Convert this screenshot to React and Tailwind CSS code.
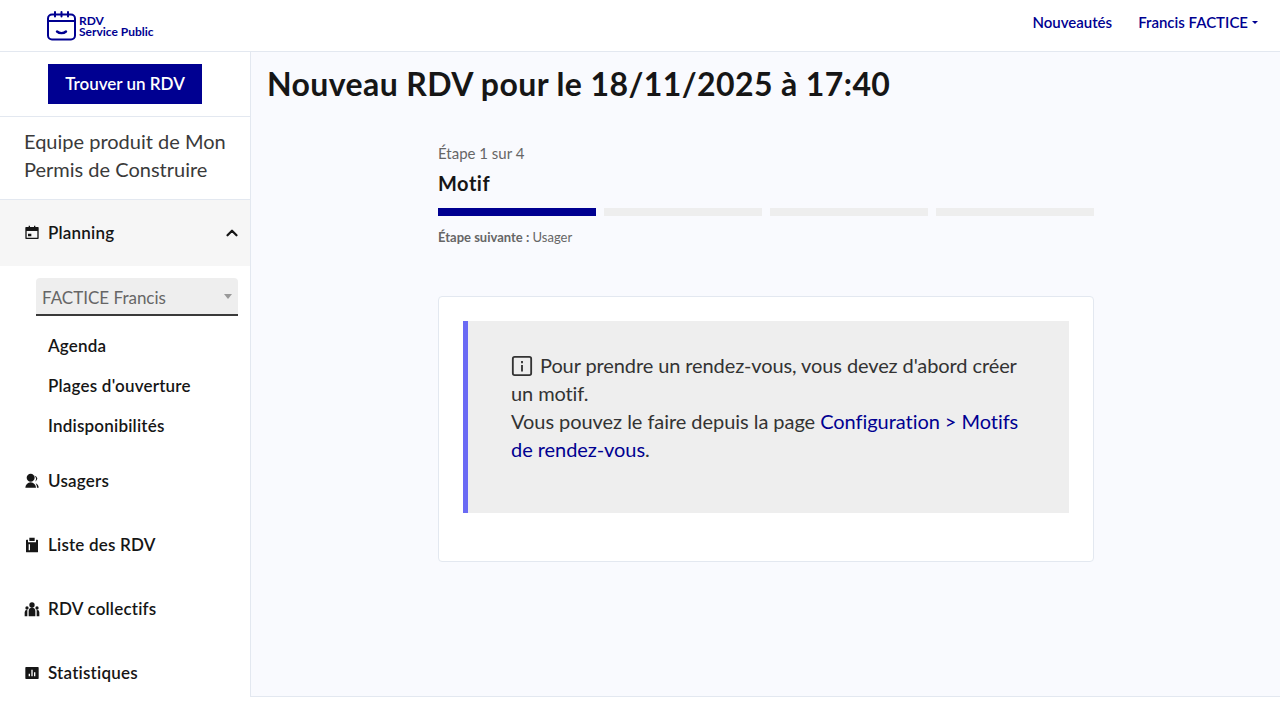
import React from 'react'
import { ChevronUp } from 'lucide-react'

const font = { fontFamily: 'Lato, "Noto Sans", sans-serif' }

function CalendarIcon() {
  return (
    <svg viewBox="0 0 24 24" className="w-4 h-4 fill-[#161616]">
      <path d="M17 3h4a1 1 0 0 1 1 1v16a1 1 0 0 1-1 1H3a1 1 0 0 1-1-1V4a1 1 0 0 1 1-1h4V1h2v2h6V1h2v2ZM4 9v10h16V9H4Zm2 4h5v4H6v-4Z" />
    </svg>
  )
}

function UsersIcon() {
  return (
    <svg viewBox="0 0 24 24" className="w-4 h-4 fill-[#161616]">
      <path d="M2 22a8 8 0 0 1 16 0H2Zm8-9c-3.3 0-6-2.7-6-6s2.7-6 6-6 6 2.7 6 6-2.7 6-6 6Zm7.4 2.2A7.5 7.5 0 0 1 22 22h-2.5c0-2.6-.8-5-2.1-6.8Zm-2-11.3a7 7 0 0 1 1.1 9.4A6 6 0 0 0 20 8a6 6 0 0 0-4.6-4.1Z" />
    </svg>
  )
}

function ClipboardIcon() {
  return (
    <svg viewBox="0 0 24 24" className="w-4 h-4 fill-[#161616]">
      <path d="M8 1h8v5H8V1ZM6 4v4h12V4h2a1 1 0 0 1 1 1v17a1 1 0 0 1-1 1H4a1 1 0 0 1-1-1V5a1 1 0 0 1 1-1h2Zm1 7v9h2v-9H7Z" />
    </svg>
  )
}

function TeamIcon() {
  return (
    <svg viewBox="0 0 24 24" className="w-4 h-4 fill-[#161616]">
      <path d="M12 10a4 4 0 1 0 0-8 4 4 0 0 0 0 8Zm-5 13V15a5 5 0 0 1 10 0v8H7ZM4.5 13a2.5 2.5 0 1 0 0-5 2.5 2.5 0 0 0 0 5Zm15 0a2.5 2.5 0 1 0 0-5 2.5 2.5 0 0 0 0 5ZM1 23v-6a3.5 3.5 0 0 1 4-3.4V23H1Zm22 0h-4v-9.4a3.5 3.5 0 0 1 4 3.4v6Z" />
    </svg>
  )
}

function ChartIcon() {
  return (
    <svg viewBox="0 0 24 24" className="w-4 h-4 fill-[#161616]">
      <path d="M3 3h18a1 1 0 0 1 1 1v16a1 1 0 0 1-1 1H3a1 1 0 0 1-1-1V4a1 1 0 0 1 1-1Zm4 10v4h2v-4H7Zm4-6v10h2V7h-2Zm4 4v6h2v-6h-2Z" />
    </svg>
  )
}

function Logo() {
  return (
    <svg viewBox="0 0 30 30" className="w-[30px] h-[30px]" fill="none" stroke="#000091" strokeWidth="2" strokeLinecap="round">
      <rect x="1" y="3.5" width="27" height="25" rx="4" />
      <path d="M1 10h27M8 1v4.5M14.5 1v4.5M21 1v4.5" />
      <path d="M10 20.5c2.5 2.2 6.5 2.2 9 0" strokeWidth="2.4" />
    </svg>
  )
}

function NavItem({ icon, label }) {
  return (
    <div className="h-16 flex items-center pl-6 shrink-0">
      <span className="w-4 h-4 flex items-center">{icon}</span>
      <span className="ml-2 text-[17px] font-semibold tracking-[0.2px] text-[#161616]">{label}</span>
    </div>
  )
}

export default function App() {
  return (
    <div className="h-[720px] overflow-hidden bg-white flex flex-col" style={font}>
      {/* Header */}
      <header className="h-[52px] shrink-0 border-b border-[#e3e8f0] flex items-center justify-between pl-[47px] pr-[22px]">
        <div className="flex items-center gap-[2px]">
          <Logo />
          <div className="text-[12px] leading-[11px] font-bold text-[#000091]">
            <div>RDV</div>
            <div>Service Public</div>
          </div>
        </div>
        <nav className="flex items-center gap-[26px] text-[15px] font-semibold text-[#000091] -mt-[6px]">
          <span>Nouveautés</span>
          <span className="flex items-center">
            Francis FACTICE
            <span className="ml-1 w-0 h-0 border-x-[3px] border-x-transparent border-t-[3px] border-t-[#000091]" />
          </span>
        </nav>
      </header>

      <div className="flex h-[645px] shrink-0">
        {/* Sidebar */}
        <aside className="w-[251px] shrink-0 border-r border-[#e3e8f0] flex flex-col overflow-hidden">
          <div className="h-[65px] shrink-0 border-b border-[#e3e8f0] pl-12 pt-3">
            <div className="w-[154px] h-10 bg-[#000091] text-white text-[17px] font-semibold flex items-center justify-center">
              Trouver un RDV
            </div>
          </div>
          <div className="h-[83px] shrink-0 border-b border-[#e3e8f0] px-6 pt-[10px] text-[20px] leading-7 text-[#3a3a3a]">
            Equipe produit de Mon Permis de Construire
          </div>
          <div className="h-[66px] shrink-0 bg-[#f6f6f6] flex items-center pl-6 pr-[9px]">
            <CalendarIcon />
            <span className="ml-2 text-[17px] font-semibold tracking-[0.2px] text-[#161616]">Planning</span>
            <ChevronUp className="ml-auto w-[18px] h-[18px] text-[#161616]" strokeWidth={3} />
          </div>
          <div className="pt-3 pl-9 pr-3 shrink-0">
            <div className="h-[38px] bg-[#eeeeee] rounded-t border-b-2 border-[#3a3a3a] flex items-center justify-between px-[6px] pt-1 text-[17px] text-[#666666]">
              <span>FACTICE Francis</span>
              <span className="-mt-1 w-0 h-0 border-x-4 border-x-transparent border-t-[5px] border-t-[#999999]" />
            </div>
          </div>
          <div className="shrink-0 pl-12 pt-[10px] pb-[3px] text-[17px] font-semibold tracking-[0.2px] text-[#161616]">
            <div className="h-10 flex items-center">Agenda</div>
            <div className="h-10 flex items-center">Plages d'ouverture</div>
            <div className="h-10 flex items-center">Indisponibilités</div>
          </div>
          <NavItem icon={<UsersIcon />} label="Usagers" />
          <NavItem icon={<ClipboardIcon />} label="Liste des RDV" />
          <NavItem icon={<TeamIcon />} label="RDV collectifs" />
          <NavItem icon={<ChartIcon />} label="Statistiques" />
        </aside>

        {/* Main */}
        <main className="flex-1 min-w-0 bg-[#f9fafe] border-b border-[#e3e8f0] px-4">
          <h1 className="pt-3 text-[32px] tracking-[0.4px] leading-10 font-bold text-[#161616]">
            Nouveau RDV pour le 18/11/2025 à 17:40
          </h1>
          <div className="w-[656px] ml-[171px] mt-[37px]">
            <div className="text-[15px] leading-6 text-[#666666]">Étape 1 sur 4</div>
            <div className="mt-1 text-[20px] tracking-[0.5px] leading-7 font-bold text-[#161616]">Motif</div>
            <div className="mt-[11px] flex gap-2">
              <div className="h-2 flex-1 bg-[#000091]" />
              <div className="h-2 flex-1 bg-[#eeeeee]" />
              <div className="h-2 flex-1 bg-[#eeeeee]" />
              <div className="h-2 flex-1 bg-[#eeeeee]" />
            </div>
            <div className="mt-[11px] text-[13px] leading-5 text-[#666666]">
              <b>Étape suivante :</b> Usager
            </div>
            <div className="mt-[49px] h-[266px] bg-white border border-[#e3e8f0] rounded p-6">
              <div className="h-[192px] bg-[#eeeeee] border-l-[5px] border-[#6a6af4] pl-[43px] pr-[40px] pt-[30px] text-[20px] leading-7 text-[#333333]">
                <p className="tracking-[-0.1px]">
                  <svg viewBox="0 0 24 24" className="inline-block w-[22px] h-[22px] mr-[7px] align-[-4px]" fill="none" stroke="#333333" strokeWidth="2">
                    <rect x="2" y="2" width="20" height="20" rx="2" />
                    <path d="M12 6.5v2.5M12 11v7" />
                  </svg>
                  Pour prendre un rendez-vous, vous devez d'abord créer un motif.
                </p>
                <p className="tracking-[-0.05px]">
                  Vous pouvez le faire depuis la page <a className="text-[#000091]">Configuration &gt; Motifs de rendez-vous</a>.
                </p>
              </div>
            </div>
          </div>
        </main>
      </div>
    </div>
  )
}
